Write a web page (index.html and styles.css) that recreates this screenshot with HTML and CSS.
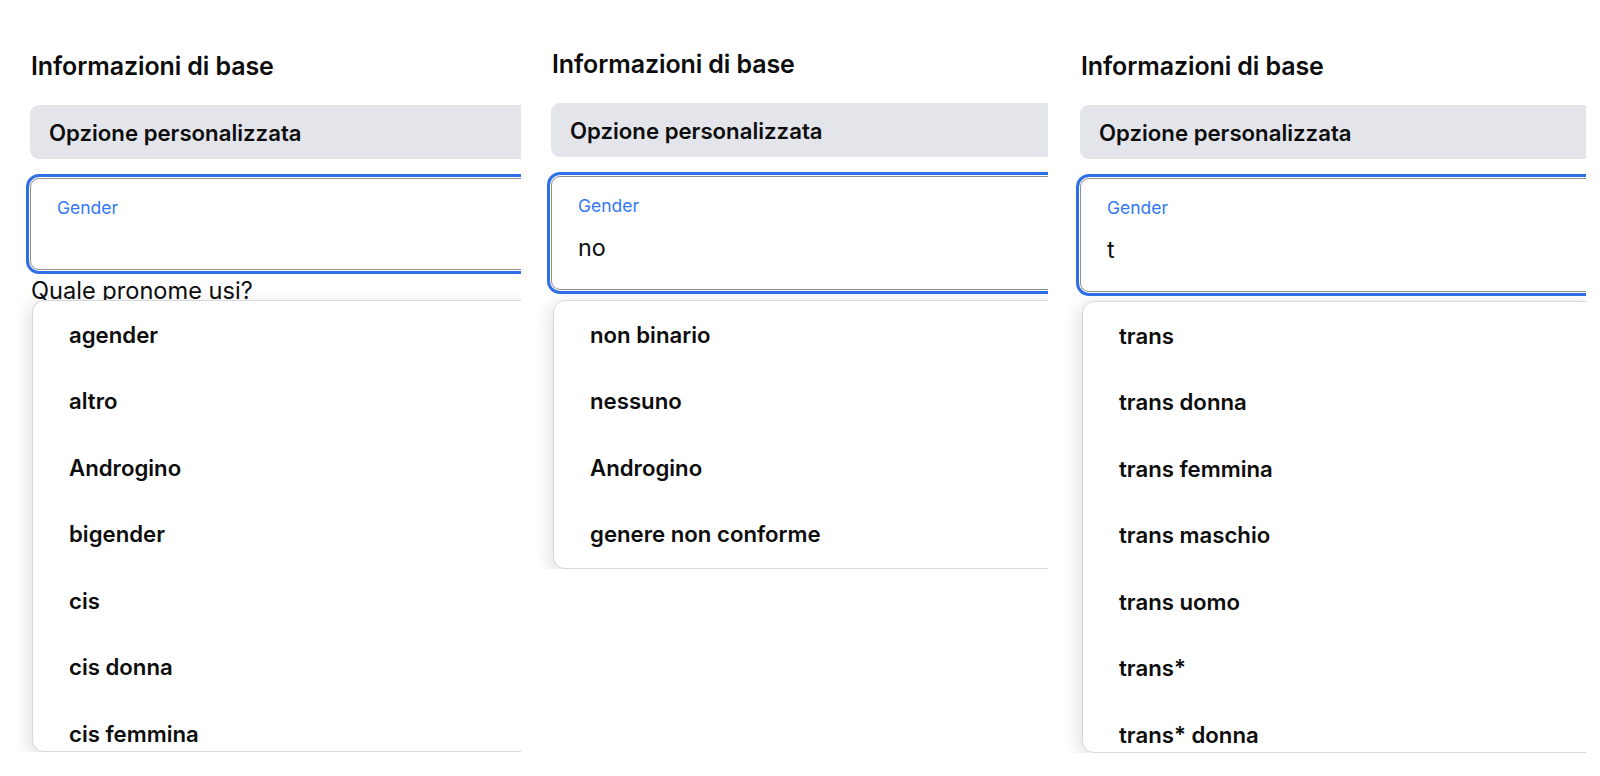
FILE: index.html
```html
<!DOCTYPE html>
<html lang="it">
<head>
<meta charset="utf-8">
<title>Informazioni di base</title>
<link rel="stylesheet" href="styles.css">
</head>
<body>
<main class="row">
  <section class="panel panel--one">
    <div class="panel-inner">
      <h2 class="title">Informazioni di base</h2>
      <div class="choice">Opzione personalizzata</div>
      <div class="field field--empty">
        <span class="field-label">Gender</span>
      </div>
      <p class="question">Quale pronome usi?</p>
      <ul class="menu menu--tall menu--over">
        <li class="menu-item">agender</li>
        <li class="menu-item">altro</li>
        <li class="menu-item">Androgino</li>
        <li class="menu-item">bigender</li>
        <li class="menu-item">cis</li>
        <li class="menu-item">cis donna</li>
        <li class="menu-item">cis femmina</li>
      </ul>
    </div>
  </section>

  <section class="panel panel--two">
    <div class="panel-inner">
      <h2 class="title">Informazioni di base</h2>
      <div class="choice">Opzione personalizzata</div>
      <div class="field">
        <span class="field-label">Gender</span>
        <span class="field-value">no</span>
      </div>
      <ul class="menu menu--short">
        <li class="menu-item">non binario</li>
        <li class="menu-item">nessuno</li>
        <li class="menu-item">Androgino</li>
        <li class="menu-item">genere non conforme</li>
      </ul>
    </div>
  </section>

  <section class="panel panel--three">
    <div class="panel-inner">
      <h2 class="title">Informazioni di base</h2>
      <div class="choice">Opzione personalizzata</div>
      <div class="field">
        <span class="field-label">Gender</span>
        <span class="field-value">t</span>
      </div>
      <ul class="menu menu--tall menu--low">
        <li class="menu-item">trans</li>
        <li class="menu-item">trans donna</li>
        <li class="menu-item">trans femmina</li>
        <li class="menu-item">trans maschio</li>
        <li class="menu-item">trans uomo</li>
        <li class="menu-item">trans*</li>
        <li class="menu-item">trans* donna</li>
      </ul>
    </div>
  </section>
</main>
</body>
</html>
```

FILE: styles.css
```css
html, body {
  margin: 0;
  padding: 0;
  background: #ffffff;
}

body {
  font-family: "Inter", "Liberation Sans", sans-serif;
  color: #0d0d0d;
  width: 1600px;
  height: 776px;
  overflow: hidden;
}

.row {
  display: flex;
  align-items: flex-start;
  gap: 30px;
  padding-left: 30px;
}

.panel {
  flex: none;
  clip-path: inset(-60px 0 0 -60px);
}

.panel--one { width: 491px; padding-top: 50px; }
.panel--two { width: 497px; padding-top: 48px; }
.panel--three { width: 506px; padding-top: 50px; margin-left: 2px; }

.panel-inner {
  width: calc(100% + 14px);
}

.title {
  margin: 0 0 0 1px;
  font-size: 25px;
  line-height: 32px;
  font-weight: 600;
  letter-spacing: -0.1px;
}

.choice {
  margin-top: 23px;
  height: 54px;
  display: flex;
  align-items: center;
  padding-left: 19px;
  background: #e4e5ea;
  border-radius: 9px;
  font-size: 22.2px;
  font-weight: 600;
}

.field {
  margin-top: 19px;
  border: 1.5px solid #8e8e93;
  border-radius: 9px;
  outline: 3px solid #2f6fe6;
  outline-offset: 1px;
  padding: 18px 26px 26px;
  display: flex;
  flex-direction: column;
  gap: 16px;
}

.field--empty {
  padding-bottom: 50px;
}

.field-label {
  font-size: 17.5px;
  line-height: 22px;
  color: #3478f6;
}

.field-value {
  font-size: 23.3px;
  line-height: 30px;
  color: #0d0d0d;
}

.question {
  margin: 6.5px 0 0 1px;
  font-size: 23.6px;
  line-height: 28px;
}

.menu {
  position: relative;
  list-style: none;
  margin: 10px 0 0 2px;
  padding: 0;
  background: #ffffff;
  border: 1px solid #d6d6db;
  border-radius: 12px;
  box-shadow: -3px 4px 18px rgba(0, 0, 0, 0.13);
  overflow: hidden;
}

.menu--over { margin-top: -4.5px; }
.menu--low { margin-top: 9px; }
.menu--tall { height: 450px; }
.menu--short { height: 267px; }

.menu-item {
  height: 66.5px;
  display: flex;
  align-items: center;
  padding-left: 36px;
  font-size: 22.2px;
  font-weight: 600;
}
```
